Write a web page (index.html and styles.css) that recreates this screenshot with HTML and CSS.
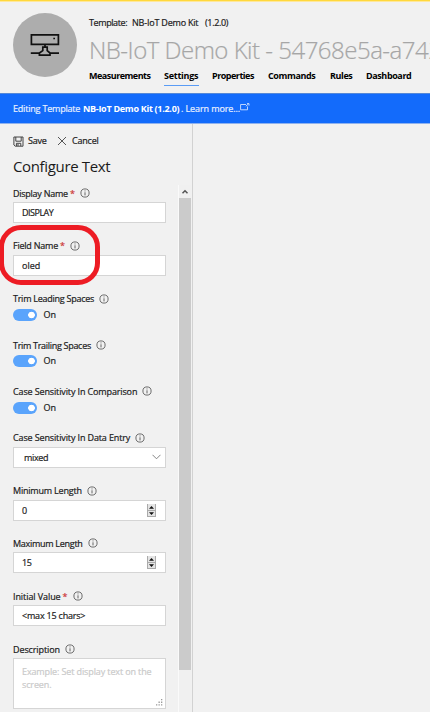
FILE: index.html
```
<!DOCTYPE html>
<html lang="en">
<head>
<meta charset="utf-8">
<title>NB-IoT Demo Kit</title>
<link rel="stylesheet" href="styles.css">
</head>
<body>
<svg class="defs" width="0" height="0"><defs>
<symbol id="info" viewBox="0 0 10 10"><circle cx="5" cy="5" r="4.1" fill="none" stroke="#555" stroke-width=".85"/><path d="M5 4.3V7.4M5 2.5V3.4" stroke="#555" stroke-width=".9"/></symbol>
<symbol id="spin" viewBox="0 0 9 13"><path d="M0 0H9V13H0Z" fill="#e4e4e4"/><path d="M.5 0V13M8.5 0V13M0 6.5H9M0 12.5H9" stroke="#aaa" fill="none"/><path d="M2 4.8L4.5 2L7 4.8ZM2 8.2L4.5 11L7 8.2Z" fill="#111"/></symbol>
</defs></svg>
<header class="header">
  <div class="avatar"><svg width="30" height="25" viewBox="0 0 30 25" fill="none" stroke="#111" stroke-width="1.7"><path d="M1.4 1.8H28.4V11.3H1.4Z"/><path d="M23.3 5.5H25"/><path d="M15 11.5V15M12.8 14.2H17.2V17.6L20 20V22.2H9.4V20L12.8 17.6ZM.8 20.2H9.4M20 20.2H29"/></svg></div>
  <div class="heading">
    <div class="crumb"><span class="c1">Template:</span><span class="c2">NB-IoT Demo Kit</span><span class="c3">(1.2.0)</span></div>
    <h1 class="title">NB-IoT Demo Kit - 54768e5a-a742</h1>
    <nav class="tabs"><a class="t1">Measurements</a><a class="t2 active">Settings</a><a class="t3">Properties</a><a class="t4">Commands</a><a class="t5">Rules</a><a class="t6">Dashboard</a></nav>
  </div>
</header>
<div class="banner"><span class="b1">Editing Template</span><b class="b2">NB-IoT Demo Kit (1.2.0)</b><span class="b3">. Learn more...</span><svg width="10" height="8" viewBox="0 0 10 8" fill="none" stroke="#cfe0ff" stroke-width=".9"><path d="M6 1.5H.6V6.8H7.5V3.5M5.8 3.2L8.6 .8M7 .6H9V2.6"/></svg></div>
<main class="main">
  <aside class="panel">
    <div class="actions">
      <svg width="11" height="11" viewBox="0 0 11 11" fill="none" stroke="#444" stroke-width="1"><path d="M.9 1H10V10.2H2.2L.9 9ZM2.8 1V5.2H8.2V1M3.4 10V7.3H7.8V10M5 8V10"/></svg><span class="save">Save</span>
      <svg width="10" height="10" viewBox="0 0 10 10" stroke="#444" stroke-width=".9"><path d="M1 1L9 9M9 1L1 9"/></svg><span class="cancel">Cancel</span>
    </div>
    <h2 class="subtitle">Configure Text</h2>
    <div class="scroller">
      <form class="form">
        <div class="field"><label><span class="l1">Display Name</span><i>*</i><svg><use href="#info"/></svg></label><div class="box"><span class="v1">DISPLAY</span></div></div>
        <div class="field"><label><span class="l2">Field Name</span><i>*</i><svg><use href="#info"/></svg></label><div class="box"><span class="v2">oled</span></div><div class="marker"></div></div>
        <div class="field switch"><label><span class="l3">Trim Leading Spaces</span><svg><use href="#info"/></svg></label><div class="toggle"><b></b><span>On</span></div></div>
        <div class="field switch"><label><span class="l4">Trim Trailing Spaces</span><svg><use href="#info"/></svg></label><div class="toggle"><b></b><span>On</span></div></div>
        <div class="field switch"><label><span class="l5">Case Sensitivity In Comparison</span><svg><use href="#info"/></svg></label><div class="toggle"><b></b><span>On</span></div></div>
        <div class="field"><label><span class="l6">Case Sensitivity In Data Entry</span><svg><use href="#info"/></svg></label><div class="box select"><span class="v3">mixed</span><svg width="9" height="6" viewBox="0 0 9 6" fill="none" stroke="#777" stroke-width=".9"><path d="M.5 .8L4.5 4.8L8.5 .8"/></svg></div></div>
        <div class="field"><label><span class="l7">Minimum Length</span><svg><use href="#info"/></svg></label><div class="box number"><span>0</span><svg width="9" height="13"><use href="#spin"/></svg></div></div>
        <div class="field"><label><span class="l8">Maximum Length</span><svg><use href="#info"/></svg></label><div class="box number"><span class="v5">15</span><svg width="9" height="13"><use href="#spin"/></svg></div></div>
        <div class="field"><label><span class="l9">Initial Value</span><i>*</i><svg><use href="#info"/></svg></label><div class="box"><span class="v4">&lt;max 15 chars&gt;</span></div></div>
        <div class="field"><label><span class="l10">Description</span><svg><use href="#info"/></svg></label><div class="box area"><span class="p1">Example: Set display text on the</span><span class="p2">screen.</span><svg class="grip" width="7" height="7" viewBox="0 0 7 7" fill="#999"><path d="M5 0H6.3V1.3H5ZM5 2.6H6.3V3.9H5ZM2.5 2.6H3.8V3.9H2.5ZM5 5.2H6.3V6.5H5ZM2.5 5.2H3.8V6.5H2.5ZM0 5.2H1.3V6.5H0Z"/></svg></div></div>
      </form>
      <div class="scrollbar"><svg width="12" height="13" viewBox="0 0 12 13" fill="none" stroke="#555" stroke-width="1.5"><path d="M3.5 8.2L6 5.7L8.5 8.2"/></svg><div class="thumb"></div></div>
    </div>
  </aside>
</main>
</body>
</html>
```
FILE: styles.css
```
* { box-sizing: border-box; }
html, body { margin: 0; height: 712px; overflow: hidden; }
body { background: #f1f1f1; color: #1b1b1b; font: 9px/16px "Open Sans", "Noto Sans", sans-serif; white-space: nowrap; -webkit-text-stroke: .2px; }
svg { flex: none; display: block; }
.defs { position: absolute; }
.header { display: flex; height: 93px; border-top: 1px solid #ffd83d; box-shadow: inset 0 1px #ffe89a; padding: 12px 0 0 13px; overflow: hidden; }
.avatar { flex: none; width: 64px; height: 64px; border-radius: 50%; background: #adadad; display: flex; align-items: center; justify-content: center; }
.heading { margin-left: 12px; padding-top: 2px; }
.crumb { display: flex; height: 16px; }
.c1 { width: 43px; letter-spacing: -.4px; }
.c2 { width: 73px; letter-spacing: -.2px; }
.c3 { letter-spacing: -.33px; }
.title { margin: 2px 0 0; height: 35px; font-size: 24px; line-height: 33px; font-weight: 300; color: #a6a6a6; letter-spacing: -.5px; -webkit-text-stroke: .2px; }
.tabs { display: flex; font-weight: 700; color: #000; letter-spacing: -.4px; -webkit-text-stroke: 0; }
.tabs a { flex: none; height: 18px; }
.t1 { width: 61px; margin-right: 14px; letter-spacing: -.5px; }
.t2 { width: 35px; margin-right: 13px; letter-spacing: -.25px; }
.t3 { width: 43px; margin-right: 13px; letter-spacing: -.5px; }
.t4 { width: 47px; margin-right: 15px; }
.t5 { width: 22px; margin-right: 14px; }
.active { border-bottom: 1px solid #5a9cf5; }
.banner { display: flex; align-items: center; height: 31px; padding-left: 13px; background: #136bfb; color: #e8f0ff; border-top: 1px solid #5488d8; border-bottom: 1px solid #8fb2ee; }
.b1 { width: 70px; letter-spacing: -.2px; }
.b2 { width: 98px; color: #fff; letter-spacing: -.28px; -webkit-text-stroke: 0; }
.b3 { width: 59px; letter-spacing: -.1px; }
.banner svg { margin-top: -3px; }
.main { height: 588px; display: flex; }
.panel { width: 193px; border-right: 1px solid #d2d2d2; padding-top: 9px; }
.actions { display: flex; align-items: center; height: 16px; padding-left: 13px; }
.save { margin-left: 4px; width: 29px; letter-spacing: -.2px; }
.cancel { margin-left: 5px; letter-spacing: -.2px; }
.subtitle { margin: 5px 0 0 13px; height: 25px; font-size: 15px; line-height: 24px; font-weight: 400; letter-spacing: -.35px; -webkit-text-stroke: 0; }
.scroller { display: flex; justify-content: space-between; height: 533px; margin-top: 6px; padding-right: 1px; }
.form { width: 166px; padding-left: 13px; }
.field { height: 52.8px; position: relative; }
.switch { height: 46.4px; }
label { display: flex; align-items: center; height: 16px; }
label span, label i, .box span { position: relative; top: .6px; }
label svg { width: 10px; height: 10px; margin-left: 5px; }
label i { font-style: normal; color: #c33; margin-left: 2px; }
.l1 { letter-spacing: -.25px; }
.l2 { letter-spacing: -.22px; }
.l3 { letter-spacing: -.26px; }
.l4 { letter-spacing: -.3px; }
.l5, .l6 { letter-spacing: -.13px; }
.l7 { letter-spacing: -.2px; }
.l8 { letter-spacing: -.28px; }
.l9 { letter-spacing: -.08px; }
.l10 { letter-spacing: -.1px; }
.v1 { letter-spacing: -.5px; }
.v3 { letter-spacing: -.35px; }
.v4 { letter-spacing: -.2px; }
.v5 { letter-spacing: -.3px; }
.p1, .p2 { letter-spacing: -.12px; }
.box { display: flex; align-items: center; height: 21px; margin-top: 1px; padding-left: 8px; background: #fff; border: 1px solid #d5d5d5; }
.select { padding: 0 4px 0 10px; justify-content: space-between; }
.number { padding-right: 9px; justify-content: space-between; }
.area { position: relative; height: 51px; flex-direction: column; align-items: flex-start; padding-top: 5px; line-height: 13px; color: #cacaca; }
.grip { position: absolute; right: 2px; bottom: 2px; }
.toggle { display: flex; align-items: center; height: 17px; }
.toggle b { width: 24px; height: 12px; border-radius: 6px; background: radial-gradient(circle at 18.5px 6px, #fff 3px, transparent 3.6px) #5aa4fc; }
.toggle span { margin-left: 6.5px; }
.marker { position: absolute; left: -14px; top: -13px; width: 101px; height: 60px; border: 5px solid #ed1c24; border-radius: 22px; }
.scrollbar { width: 13px; background: #f0f0f0; border-left: 1px solid #fafafa; }
.thumb { height: 472px; background: #cbcbcb; }
```
